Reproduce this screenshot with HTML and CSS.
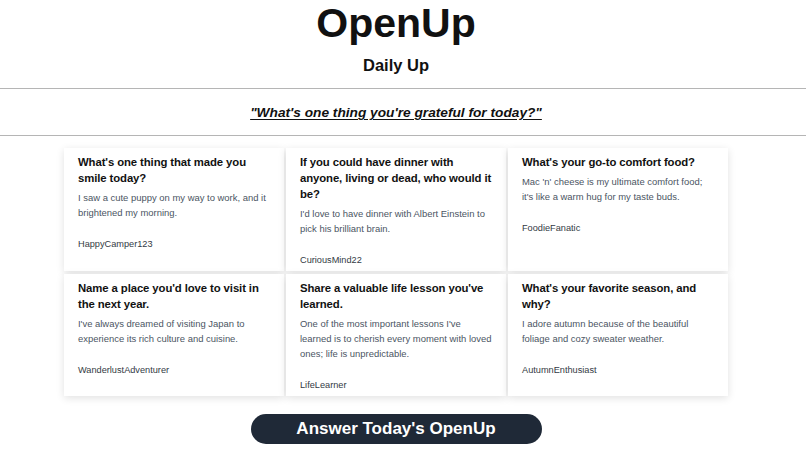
FILE: index.html
```html
<!DOCTYPE html>
<html>
<head>
<meta charset="utf-8">
<link rel="stylesheet" href="styles.css">
</head>
<body>
<header class="head wrap">
  <h1 class="logo">OpenUp</h1>
  <h2 class="sub">Daily Up</h2>
</header>
<hr class="rule">
<p class="question wrap"><span>"What's one thing you're grateful for today?"</span></p>
<hr class="rule">
<main class="wrap">
  <section class="grid">
    <article class="card">
      <h3 class="q">What's one thing that made you smile today?</h3>
      <p class="a">I saw a cute puppy on my way to work, and it brightened my morning.</p>
      <p class="who">HappyCamper123</p>
    </article>
    <article class="card">
      <h3 class="q">If you could have dinner with anyone, living or dead, who would it be?</h3>
      <p class="a">I'd love to have dinner with Albert Einstein to pick his brilliant brain.</p>
      <p class="who">CuriousMind22</p>
    </article>
    <article class="card">
      <h3 class="q">What's your go-to comfort food?</h3>
      <p class="a">Mac 'n' cheese is my ultimate comfort food; it's like a warm hug for my taste buds.</p>
      <p class="who">FoodieFanatic</p>
    </article>
    <article class="card">
      <h3 class="q">Name a place you'd love to visit in the next year.</h3>
      <p class="a">I've always dreamed of visiting Japan to experience its rich culture and cuisine.</p>
      <p class="who">WanderlustAdventurer</p>
    </article>
    <article class="card">
      <h3 class="q">Share a valuable life lesson you've learned.</h3>
      <p class="a">One of the most important lessons I've learned is to cherish every moment with loved ones; life is unpredictable.</p>
      <p class="who">LifeLearner</p>
    </article>
    <article class="card">
      <h3 class="q">What's your favorite season, and why?</h3>
      <p class="a">I adore autumn because of the beautiful foliage and cozy sweater weather.</p>
      <p class="who">AutumnEnthusiast</p>
    </article>
  </section>
  <div class="cta-row">
    <button class="cta">Answer Today's OpenUp</button>
  </div>
</main>
</body>
</html>
```

FILE: styles.css
```css
html, body {
  margin: 0;
  padding: 0;
  background: #ffffff;
  font-family: "Liberation Sans", Arial, sans-serif;
  color: #111111;
}

.wrap {
  padding-right: 14px;
}

.head {
  display: flex;
  flex-direction: column;
  align-items: center;
  padding-top: 1px;
}

.logo {
  margin: 0;
  font-size: 41px;
  line-height: 44px;
  font-weight: 700;
}

.sub {
  margin: 8px 0 0;
  font-size: 16.5px;
  line-height: 24px;
  font-weight: 700;
}

.rule {
  margin: 11px 0 0;
  border: 0;
  border-top: 1px solid #b5b5b5;
  height: 0;
}

.question {
  margin: 0;
  height: 46px;
  padding-top: 1px;
  box-sizing: border-box;
  display: flex;
  align-items: center;
  justify-content: center;
}

.question span {
  font-size: 13.7px;
  font-weight: 700;
  font-style: italic;
  text-decoration: underline;
  text-underline-offset: 2px;
}

.rule + .question + .rule {
  margin-top: 0;
}

.grid {
  margin: 12px auto 0;
  width: 664px;
  display: grid;
  grid-template-columns: repeat(3, 1fr);
  column-gap: 2px;
  row-gap: 3px;
}

.card {
  background: #fff;
  box-shadow: 0 2px 8px rgba(0, 0, 0, 0.12);
  padding: 6px 13px 3px 14px;
  display: flex;
  flex-direction: column;
}

.q {
  margin: 0;
  font-size: 11.35px;
  line-height: 16px;
  letter-spacing: -0.1px;
  font-weight: 700;
  color: #111;
}

.a {
  margin: 4px 0 0;
  font-size: 9.45px;
  line-height: 15px;
  color: #4b5563;
}

.who {
  margin: 17px 0 0;
  font-size: 9.2px;
  line-height: 15px;
  color: #333a44;
}

.cta-row {
  display: flex;
  justify-content: center;
  margin-top: 18px;
}

.cta {
  width: 291px;
  height: 30px;
  border: 0;
  border-radius: 15px;
  background: #1f2937;
  color: #fff;
  font-family: "Liberation Sans", Arial, sans-serif;
  font-size: 17px;
  font-weight: 700;
  padding: 0;
}
```
